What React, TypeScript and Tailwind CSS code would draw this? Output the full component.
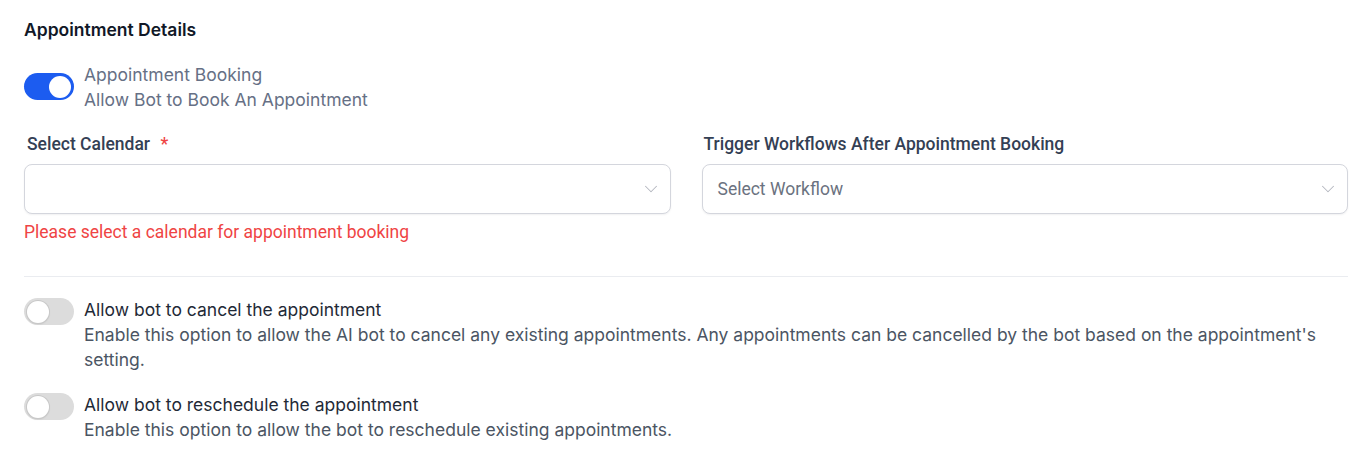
import { ChevronDown } from "lucide-react";

const inter = "font-['Inter',sans-serif]";
const roboto = "font-['Roboto',sans-serif]";

function Toggle({ on }: { on: boolean }) {
  return (
    <div
      className={`relative flex h-[27px] w-[50px] shrink-0 items-center rounded-full px-[3px] ${
        on ? "justify-end bg-[#1c5cf0]" : "justify-start bg-[#dcdcdc]"
      }`}
    >
      <div
        className={`h-[22px] w-[22px] rounded-full bg-white ${
          on ? "" : "shadow-[0_0_0_1px_#c8c8c8,0_1px_2px_rgba(0,0,0,0.15)]"
        }`}
      />
    </div>
  );
}

function SelectBox({ placeholder }: { placeholder?: string }) {
  return (
    <div className="flex h-[50px] items-center justify-between rounded-lg border border-[#d4d6dd] bg-white pl-[15px] pr-[8px] shadow-[0_1px_2px_rgba(16,24,40,0.06)]">
      <span className={`${roboto} text-[17.5px] text-[#6b7280]`}>{placeholder}</span>
      <ChevronDown className="h-[22px] w-[22px] text-[#b4b7bf]" strokeWidth={1.1} />
    </div>
  );
}

export default function App() {
  return (
    <div className={`${inter} min-h-screen bg-white pl-[24px] pr-[23px] pt-[18px] text-[#101828]`}>
      <h2 className="text-[17.5px] font-semibold leading-[24px] text-[#111827]">Appointment Details</h2>

      <div className="mt-[20px] flex items-start gap-[10px]">
        <div className="pt-[11px]">
          <Toggle on />
        </div>
        <div className="text-[17.5px] leading-[25px] text-[#667085]">
          <div>Appointment Booking</div>
          <div>Allow Bot to Book An Appointment</div>
        </div>
      </div>

      <div className="mt-[20px] grid grid-cols-2 gap-[31px]">
        <div>
          <label className={`${roboto} ml-[3px] block text-[17.5px] font-medium leading-[24px] text-[#344054]`}>
            Select Calendar <span className="ml-[6px] text-[#ef4444]">*</span>
          </label>
          <div className="mt-[8px]">
            <SelectBox />
          </div>
          <p className={`${roboto} mt-[6px] text-[17.5px] leading-[24px] text-[#ef4444]`}>
            Please select a calendar for appointment booking
          </p>
        </div>
        <div>
          <label className={`${roboto} ml-[2px] block text-[17.5px] font-medium leading-[24px] text-[#344054]`}>
            Trigger Workflows After Appointment Booking
          </label>
          <div className="mt-[8px]">
            <SelectBox placeholder="Select Workflow" />
          </div>
        </div>
      </div>

      <hr className="mt-[32px] border-[#eaecf0]" />

      <div className="mt-[20px] flex items-start gap-[10px]">
        <div className="pt-[1px]">
          <Toggle on={false} />
        </div>
        <div className="text-[17.5px] leading-[25px]">
          <div className="text-[#1f2a37]">Allow bot to cancel the appointment</div>
          <div className="text-[#4b5563]">
            Enable this option to allow the AI bot to cancel any existing appointments. Any appointments can be
            cancelled by the bot based on the appointment's setting.
          </div>
        </div>
      </div>

      <div className="mt-[20px] flex items-start gap-[10px]">
        <div className="pt-[1px]">
          <Toggle on={false} />
        </div>
        <div className="text-[17.5px] leading-[25px]">
          <div className="text-[#1f2a37]">Allow bot to reschedule the appointment</div>
          <div className="text-[#4b5563]">Enable this option to allow the bot to reschedule existing appointments.</div>
        </div>
      </div>
    </div>
  );
}
